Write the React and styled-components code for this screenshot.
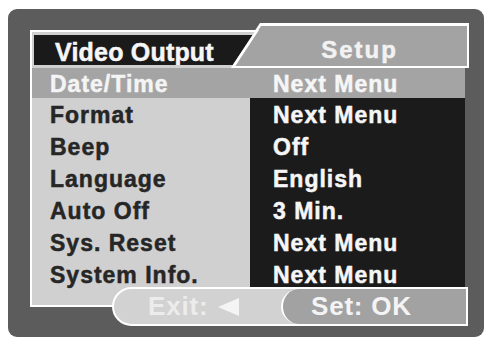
import React from 'react'
import styled, { createGlobalStyle } from 'styled-components';

const GlobalStyle = createGlobalStyle`
body {
    margin: 0;
    background: #ffffff;
    font-family: "Liberation Sans", Arial, sans-serif;
}
`;

const items = [
    { label: "Date/Time", value: "Next Menu" },
    { label: "Format", value: "Next Menu" },
    { label: "Beep", value: "Off" },
    { label: "Language", value: "English" },
    { label: "Auto Off", value: "3 Min." },
    { label: "Sys. Reset", value: "Next Menu" },
    { label: "System Info.", value: "Next Menu" },
];

const App = () => {
    return (
        <>
            <GlobalStyle />
            <Frame>
                <Header>
                    <SetupOuter>
                        <SetupFace>Setup</SetupFace>
                    </SetupOuter>
                    <VideoOuter>
                        <VideoGap>
                            <VideoFace>Video Output</VideoFace>
                        </VideoGap>
                    </VideoOuter>
                </Header>
                <Panel>
                    {items.map((item, i) => (
                        <Row key={item.label} active={i === 0}>
                            <Label active={i === 0}>{item.label}</Label>
                            <Value active={i === 0}>{item.value}</Value>
                        </Row>
                    ))}
                </Panel>
                <Bar>
                    <ExitPart>
                        Exit:
                        <svg width="21" height="18" viewBox="0 0 21 18">
                            <polygon points="21,0 21,18 0,9" fill="#f4f4f4" />
                        </svg>
                    </ExitPart>
                    <SetPart>Set: OK</SetPart>
                </Bar>
            </Frame>
        </>
    )
};

export default App;

const Frame = styled.div`
box-sizing: border-box;
width: 476px;
height: 328px;
margin: 9px 0 0 8px;
padding: 14px 0 0 22px;
background: #5d5c5d;
border-radius: 9px;
display: flex;
flex-direction: column;
`;

const Header = styled.div`
width: 439px;
height: 45px;
display: grid;
`;

const SetupOuter = styled.div`
grid-area: 1 / 1;
background: #ffffff;
clip-path: polygon(230px 0, 100% 0, 100% 100%, 200px 100%);
display: flex;
`;

const SetupFace = styled.div`
flex: 1;
margin: 3px 2px 2px 0;
background: #a4a3a4;
clip-path: polygon(231px 0, 100% 0, 100% 100%, 205px 100%);
display: flex;
align-items: flex-end;
justify-content: center;
padding: 0 10px 4px 232px;
color: #f2f2f2;
font-size: 24px;
line-height: 24px;
font-weight: bold;
letter-spacing: 2px;
-webkit-text-stroke: 0.5px #f2f2f2;
`;

const VideoOuter = styled.div`
grid-area: 1 / 1;
margin-top: 7px;
width: 232px;
height: 38px;
background: #ffffff;
clip-path: polygon(0 0, 229px 0, 204px 100%, 0 100%);
display: flex;
`;

const VideoGap = styled.div`
margin: 2px 0 0 2px;
width: 230px;
height: 36px;
background: #cfcfcf;
clip-path: polygon(0 0, 222.6px 0, 198.8px 100%, 0 100%);
`;

const VideoFace = styled.div`
box-sizing: border-box;
margin: 3px 0 3px 2px;
width: 228px;
height: 30px;
background: #1b1a1b;
clip-path: polygon(0 0, 218.6px 0, 198.8px 100%, 0 100%);
padding: 4.8px 0 0 21px;
color: #f6f6f6;
font-size: 25px;
line-height: 25px;
font-weight: bold;
letter-spacing: 0.2px;
white-space: nowrap;
-webkit-text-stroke: 0.5px #f6f6f6;
`;

const Panel = styled.div`
width: 435px;
box-sizing: border-box;
background: #d0d0d0;
border-left: 2px solid #ffffff;
border-bottom: 2px solid #ffffff;
padding-bottom: 15px;
display: flex;
flex-direction: column;
`;

const Row = styled.div`
display: grid;
grid-template-columns: 218px 1fr;
height: ${p => (p.active ? "30px" : "32px")};
background: ${p => (p.active ? "#a5a4a5" : "transparent")};
`;

const Cell = styled.div`
display: flex;
align-items: center;
padding-top: 2px;
font-size: 23px;
font-weight: bold;
letter-spacing: 1px;
white-space: nowrap;
-webkit-text-stroke: 0.5px currentColor;
`;

const Label = styled(Cell)`
padding-left: 18px;
color: ${p => (p.active ? "#f4f4f4" : "#262626")};
`;

const Value = styled(Cell)`
padding-left: 23px;
background: ${p => (p.active ? "transparent" : "#1c1b1c")};
color: #f6f6f6;
`;

const Bar = styled.div`
box-sizing: border-box;
margin: -20px 0 0 82px;
width: 356px;
height: 39px;
display: flex;
background: #d2d2d2;
border: 2px solid #ffffff;
border-radius: 20px 0 0 20px;
font-size: 26px;
font-weight: bold;
letter-spacing: 0.8px;
`;

const ExitPart = styled.div`
flex: 1;
display: flex;
align-items: center;
gap: 10px;
padding-left: 34px;
color: #ececec;
`;

const SetPart = styled.div`
box-sizing: border-box;
width: 185px;
display: flex;
align-items: center;
padding-left: 28px;
background: #a3a2a3;
border-left: 2px solid #ffffff;
border-radius: 18px 0 0 18px;
color: #f4f4f4;
`;
